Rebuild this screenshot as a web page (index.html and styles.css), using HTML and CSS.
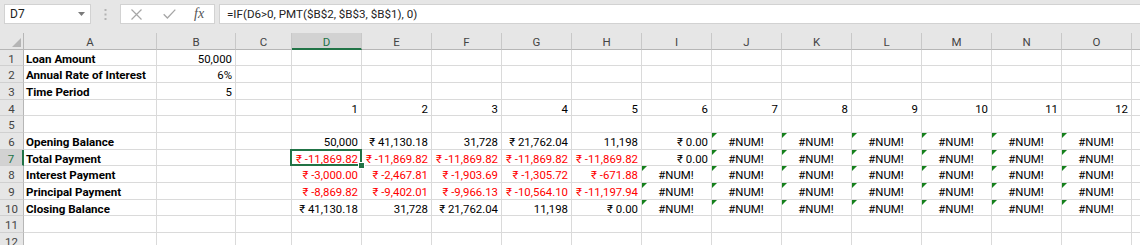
FILE: index.html
```html
<!DOCTYPE html>
<html lang="en">
  <head>
    <meta charset="UTF-8" />
    <meta name="viewport" content="width=device-width, initial-scale=1.0" />
    <title>Loan Schedule</title>
    <link rel="stylesheet" href="styles.css">
  </head>
  <body>
    <div class="toolbar">
      <div class="name-box">
        <span>D7</span>
        <svg class="drop" width="7" height="4" viewBox="0 0 7 4"><path d="M0 0H7L3.5 4Z" fill="#7a7a7a"/></svg>
      </div>
      <div class="grip">
        <svg width="3" height="11" viewBox="0 0 3 11">
          <rect x="0.5" y="0" width="2" height="2" fill="#b3b3b3"/>
          <rect x="0.5" y="4.5" width="2" height="2" fill="#b3b3b3"/>
          <rect x="0.5" y="9" width="2" height="2" fill="#b3b3b3"/>
        </svg>
      </div>
      <div class="fx-box">
        <svg class="cancel" width="11" height="11" viewBox="0 0 11 11"><path d="M0.5 0.5L10.5 10.5M10.5 0.5L0.5 10.5" stroke="#a6a6a6" stroke-width="1.2" fill="none"/></svg>
        <svg class="enter" width="13" height="10" viewBox="0 0 13 10"><path d="M0.7 5.2L4.4 9L12.3 0.6" stroke="#a6a6a6" stroke-width="1.3" fill="none"/></svg>
        <span class="fx">fx</span>
      </div>
      <div class="formula">=IF(D6&gt;0, PMT($B$2, $B$3, $B$1), 0)</div>
    </div>

    <div class="sheet" id="sheet"></div>

    <script>
      const sheet = document.getElementById("sheet");
      const letters = "ABCDEFGHIJKLMNO".split("");
      const N = "#NUM!";
      const P = "₹ -11,869.82";
      const nums = [N, N, N, N, N, N];

      const rows = [
        ["Loan Amount", "50,000"],
        ["Annual Rate of Interest", "6%"],
        ["Time Period", "5"],
        ["", "", "", "1", "2", "3", "4", "5", "6", "7", "8", "9", "10", "11", "12"],
        [],
        ["Opening Balance", "", "", "50,000", "₹ 41,130.18", "31,728", "₹ 21,762.04", "11,198", "₹ 0.00", ...nums],
        ["Total Payment", "", "", P, P, P, P, P, "₹ 0.00", ...nums],
        ["Interest Payment", "", "", "₹ -3,000.00", "₹ -2,467.81", "₹ -1,903.69", "₹ -1,305.72", "₹ -671.88", N, ...nums],
        ["Principal Payment", "", "", "₹ -8,869.82", "₹ -9,402.01", "₹ -9,966.13", "₹ -10,564.10", "₹ -11,197.94", N, ...nums],
        ["Closing Balance", "", "", "₹ 41,130.18", "31,728", "₹ 21,762.04", "11,198", "₹ 0.00", N, ...nums],
        [],
        []
      ];

      function addCell(className, text) {
        const cell = document.createElement("div");
        cell.className = className;
        cell.textContent = text;
        sheet.appendChild(cell);
        return cell;
      }

      // header row, plus the blank edge of column P
      addCell("corner", "");
      letters.forEach((letter) => {
        addCell(letter === "D" ? "col-head active" : "col-head", letter);
      });
      addCell("col-head", "");

      rows.forEach((row, r) => {
        const rowNum = r + 1;
        addCell(rowNum === 7 ? "row-head active" : "row-head", rowNum);
        letters.forEach((letter, c) => {
          const value = row[c] || "";
          let className = "cell";
          if (c === 0) {
            className += " label";
          } else if (value === N) {
            className += " err";
          } else if (value) {
            className += " num";
            if (value.includes("-")) className += " neg";
          }
          if (letter === "D" && rowNum === 7) className += " sel";
          addCell(className, value);
        });
        addCell("cell", "");
      });
    </script>
  </body>
</html>
```

FILE: styles.css
```css
body {
  margin: 0;
  width: 1140px;
  height: 245px;
  overflow: hidden;
  background-color: #fff;
  font-family: Roboto, "Noto Sans", sans-serif;
}
.toolbar {
  height: 33px;
  box-sizing: border-box;
  padding-top: 4px;
  background-color: #e6e6e6;
  display: flex;
  align-items: flex-start;
}
.name-box,
.fx-box,
.formula {
  height: 20px;
  box-sizing: border-box;
  background-color: #fff;
  border: 1px solid #d2d2d2;
  display: flex;
  align-items: center;
}
.name-box {
  margin-left: 4px;
  width: 87px;
  padding: 0 5px 0 5px;
  justify-content: space-between;
  font-size: 12px;
  color: #222;
}
.grip {
  width: 29px;
  height: 20px;
  display: flex;
  align-items: center;
  justify-content: center;
}
.fx-box {
  width: 95px;
  padding-left: 10px;
}
.cancel {
  margin-right: 21px;
}
.enter {
  margin-right: 18px;
}
.fx {
  font-family: "Liberation Serif", serif;
  font-style: italic;
  font-size: 14px;
  color: #555;
}
.formula {
  flex: 1;
  margin-left: 4px;
  padding-left: 7px;
  font-size: 11.6px;
  color: #222;
  border-right: none;
}
.sheet {
  display: grid;
  grid-template-columns: 24px 133px 79px 56px repeat(13, 70px);
  grid-auto-rows: 16.67px;
}
.corner,
.col-head,
.row-head {
  background-color: #e6e6e6;
  color: #444;
  font-size: 11.5px;
  line-height: 18px;
  text-align: center;
  box-sizing: border-box;
  overflow: hidden;
}
.corner {
  position: relative;
  border-right: 1px solid #b6b6b6;
  border-bottom: 1px solid #b6b6b6;
}
.corner::after {
  content: "";
  position: absolute;
  right: 2px;
  bottom: 2px;
  border-left: 9px solid transparent;
  border-bottom: 9px solid #b5b5b5;
}
.col-head {
  border-right: 1px solid #c8c8c8;
  border-bottom: 1px solid #b6b6b6;
}
.row-head {
  border-right: 1px solid #b6b6b6;
  border-bottom: 1px solid #d0d0d0;
}
.col-head.active {
  background-color: #d2d2d2;
  color: #217346;
  border-bottom: 2px solid #217346;
}
.row-head.active {
  background-color: #d2d2d2;
  color: #217346;
  border-right: 2px solid #217346;
}
.cell {
  position: relative;
  box-sizing: border-box;
  border-right: 1px solid #dadada;
  border-bottom: 1px solid #dadada;
  padding: 0 3px 0 2px;
  font-size: 11.4px;
  line-height: 18px;
  color: #000;
  white-space: nowrap;
  overflow: hidden;
}
.label {
  font-size: 11.6px;
  font-weight: bold;
  overflow: visible;
}
.num {
  text-align: right;
}
.neg {
  color: #ff0000;
}
.err {
  text-align: center;
}
.err::before {
  content: "";
  position: absolute;
  left: 0;
  top: 0;
  border-top: 5px solid #15801c;
  border-right: 5px solid transparent;
}
.sel {
  overflow: visible;
  z-index: 2;
}
.sel::before {
  content: "";
  position: absolute;
  left: -2px;
  top: -1px;
  right: -1px;
  bottom: -1px;
  border: 2px solid #217346;
}
.sel::after {
  content: "";
  position: absolute;
  right: -4px;
  bottom: -4px;
  width: 5px;
  height: 5px;
  background-color: #217346;
  border: 1px solid #fff;
}
```
